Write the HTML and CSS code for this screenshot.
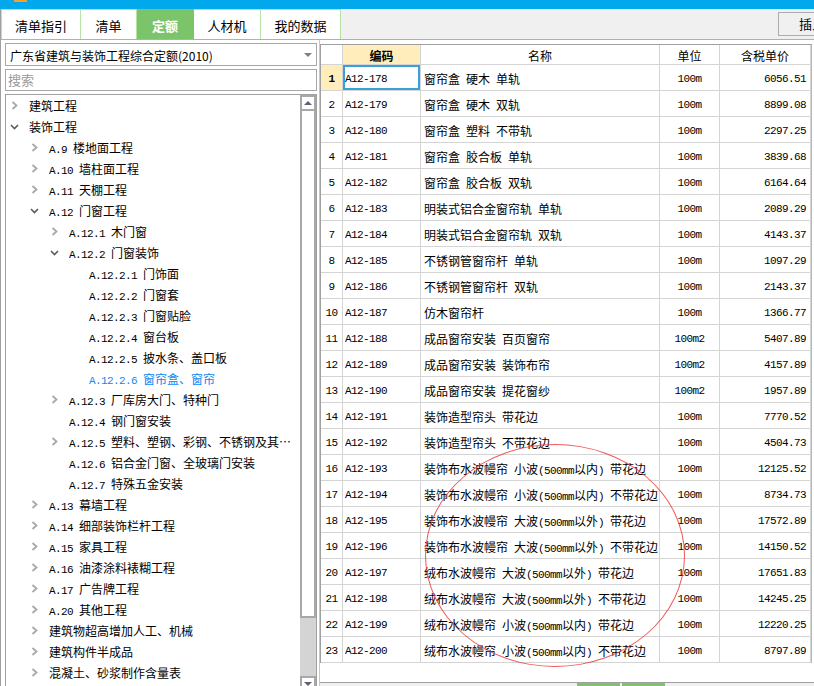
FILE: index.html
```html
<!DOCTYPE html>
<html lang="zh-CN">
<head>
<meta charset="utf-8">
<title>定额</title>
<link rel="stylesheet" href="styles.css">
</head>
<body>
<div class="titlebar"><span class="appicon"></span></div>
<div class="toolbar">
  <div class="tabs">
    <div class="tab t1">清单指引</div>
    <div class="tab t2">清单</div>
    <div class="tab t3 active">定额</div>
    <div class="tab t4">人材机</div>
    <div class="tab t5">我的数据</div>
  </div>
  <div class="spacer"></div>
  <div class="btn">插入</div>
</div>
<div class="main">
  <aside class="left">
    <div class="select"><span>广东省建筑与装饰工程综合定额(2010)</span><span class="caret"></span></div>
    <div class="search">搜索</div>
    <div class="tree">
      <div class="tree-list">
        <div class="node l0"><span class="tw"><svg class="chev-r" width="7" height="9" viewBox="0 0 7 9"><path d="M1.5 1 L5.5 4.5 L1.5 8"/></svg></span><span class="lbl">建筑工程</span></div>
        <div class="node l0"><span class="tw"><svg class="chev-d" width="9" height="6" viewBox="0 0 9 6"><path d="M1 1 L4.5 4.5 L8 1"/></svg></span><span class="lbl">装饰工程</span></div>
        <div class="node l1"><span class="tw"><svg class="chev-r" width="7" height="9" viewBox="0 0 7 9"><path d="M1.5 1 L5.5 4.5 L1.5 8"/></svg></span><span class="lbl"><span class="c">A.9 </span>楼地面工程</span></div>
        <div class="node l1"><span class="tw"><svg class="chev-r" width="7" height="9" viewBox="0 0 7 9"><path d="M1.5 1 L5.5 4.5 L1.5 8"/></svg></span><span class="lbl"><span class="c">A.10 </span>墙柱面工程</span></div>
        <div class="node l1"><span class="tw"><svg class="chev-r" width="7" height="9" viewBox="0 0 7 9"><path d="M1.5 1 L5.5 4.5 L1.5 8"/></svg></span><span class="lbl"><span class="c">A.11 </span>天棚工程</span></div>
        <div class="node l1"><span class="tw"><svg class="chev-d" width="9" height="6" viewBox="0 0 9 6"><path d="M1 1 L4.5 4.5 L8 1"/></svg></span><span class="lbl"><span class="c">A.12 </span>门窗工程</span></div>
        <div class="node l2"><span class="tw"><svg class="chev-r" width="7" height="9" viewBox="0 0 7 9"><path d="M1.5 1 L5.5 4.5 L1.5 8"/></svg></span><span class="lbl"><span class="c">A.12.1 </span>木门窗</span></div>
        <div class="node l2"><span class="tw"><svg class="chev-d" width="9" height="6" viewBox="0 0 9 6"><path d="M1 1 L4.5 4.5 L8 1"/></svg></span><span class="lbl"><span class="c">A.12.2 </span>门窗装饰</span></div>
        <div class="node l3"><span class="tw"></span><span class="lbl"><span class="c">A.12.2.1 </span>门饰面</span></div>
        <div class="node l3"><span class="tw"></span><span class="lbl"><span class="c">A.12.2.2 </span>门窗套</span></div>
        <div class="node l3"><span class="tw"></span><span class="lbl"><span class="c">A.12.2.3 </span>门窗贴脸</span></div>
        <div class="node l3"><span class="tw"></span><span class="lbl"><span class="c">A.12.2.4 </span>窗台板</span></div>
        <div class="node l3"><span class="tw"></span><span class="lbl"><span class="c">A.12.2.5 </span>披水条、盖口板</span></div>
        <div class="node l3 selected"><span class="tw"></span><span class="lbl"><span class="c">A.12.2.6 </span>窗帘盒、窗帘</span></div>
        <div class="node l2"><span class="tw"><svg class="chev-r" width="7" height="9" viewBox="0 0 7 9"><path d="M1.5 1 L5.5 4.5 L1.5 8"/></svg></span><span class="lbl"><span class="c">A.12.3 </span>厂库房大门、特种门</span></div>
        <div class="node l2"><span class="tw"></span><span class="lbl"><span class="c">A.12.4 </span>钢门窗安装</span></div>
        <div class="node l2"><span class="tw"><svg class="chev-r" width="7" height="9" viewBox="0 0 7 9"><path d="M1.5 1 L5.5 4.5 L1.5 8"/></svg></span><span class="lbl"><span class="c">A.12.5 </span>塑料、塑钢、彩钢、不锈钢及其…</span></div>
        <div class="node l2"><span class="tw"></span><span class="lbl"><span class="c">A.12.6 </span>铝合金门窗、全玻璃门安装</span></div>
        <div class="node l2"><span class="tw"></span><span class="lbl"><span class="c">A.12.7 </span>特殊五金安装</span></div>
        <div class="node l1"><span class="tw"><svg class="chev-r" width="7" height="9" viewBox="0 0 7 9"><path d="M1.5 1 L5.5 4.5 L1.5 8"/></svg></span><span class="lbl"><span class="c">A.13 </span>幕墙工程</span></div>
        <div class="node l1"><span class="tw"><svg class="chev-r" width="7" height="9" viewBox="0 0 7 9"><path d="M1.5 1 L5.5 4.5 L1.5 8"/></svg></span><span class="lbl"><span class="c">A.14 </span>细部装饰栏杆工程</span></div>
        <div class="node l1"><span class="tw"><svg class="chev-r" width="7" height="9" viewBox="0 0 7 9"><path d="M1.5 1 L5.5 4.5 L1.5 8"/></svg></span><span class="lbl"><span class="c">A.15 </span>家具工程</span></div>
        <div class="node l1"><span class="tw"><svg class="chev-r" width="7" height="9" viewBox="0 0 7 9"><path d="M1.5 1 L5.5 4.5 L1.5 8"/></svg></span><span class="lbl"><span class="c">A.16 </span>油漆涂料裱糊工程</span></div>
        <div class="node l1"><span class="tw"><svg class="chev-r" width="7" height="9" viewBox="0 0 7 9"><path d="M1.5 1 L5.5 4.5 L1.5 8"/></svg></span><span class="lbl"><span class="c">A.17 </span>广告牌工程</span></div>
        <div class="node l1"><span class="tw"><svg class="chev-r" width="7" height="9" viewBox="0 0 7 9"><path d="M1.5 1 L5.5 4.5 L1.5 8"/></svg></span><span class="lbl"><span class="c">A.20 </span>其他工程</span></div>
        <div class="node l1"><span class="tw"><svg class="chev-r" width="7" height="9" viewBox="0 0 7 9"><path d="M1.5 1 L5.5 4.5 L1.5 8"/></svg></span><span class="lbl">建筑物超高增加人工、机械</span></div>
        <div class="node l1"><span class="tw"><svg class="chev-r" width="7" height="9" viewBox="0 0 7 9"><path d="M1.5 1 L5.5 4.5 L1.5 8"/></svg></span><span class="lbl">建筑构件半成品</span></div>
        <div class="node l1"><span class="tw"><svg class="chev-r" width="7" height="9" viewBox="0 0 7 9"><path d="M1.5 1 L5.5 4.5 L1.5 8"/></svg></span><span class="lbl">混凝土、砂浆制作含量表</span></div>
      </div>
      <div class="vscroll">
        <div class="sb-btn"><span class="tri-up"></span></div>
        <div class="sb-thumb"></div>
        <div class="sb-track"></div>
        <div class="sb-btn"><span class="tri-down"></span></div>
      </div>
    </div>
  </aside>
  <section class="right">
    <table class="grid">
      <colgroup>
        <col class="w-no"><col class="w-code"><col class="w-name"><col class="w-unit"><col class="w-price">
      </colgroup>
      <thead>
        <tr><th class="corner"></th><th class="hl">编码</th><th>名称</th><th>单位</th><th>含税单价</th></tr>
      </thead>
      <tbody>
        <tr><td class="no cur">1</td><td class="code sel">A12-178</td><td class="name">窗帘盒 硬木 单轨</td><td class="unit">100m</td><td class="price">6056.51</td></tr>
        <tr><td class="no">2</td><td class="code">A12-179</td><td class="name">窗帘盒 硬木 双轨</td><td class="unit">100m</td><td class="price">8899.08</td></tr>
        <tr><td class="no">3</td><td class="code">A12-180</td><td class="name">窗帘盒 塑料 不带轨</td><td class="unit">100m</td><td class="price">2297.25</td></tr>
        <tr><td class="no">4</td><td class="code">A12-181</td><td class="name">窗帘盒 胶合板 单轨</td><td class="unit">100m</td><td class="price">3839.68</td></tr>
        <tr><td class="no">5</td><td class="code">A12-182</td><td class="name">窗帘盒 胶合板 双轨</td><td class="unit">100m</td><td class="price">6164.64</td></tr>
        <tr><td class="no">6</td><td class="code">A12-183</td><td class="name">明装式铝合金窗帘轨 单轨</td><td class="unit">100m</td><td class="price">2089.29</td></tr>
        <tr><td class="no">7</td><td class="code">A12-184</td><td class="name">明装式铝合金窗帘轨 双轨</td><td class="unit">100m</td><td class="price">4143.37</td></tr>
        <tr><td class="no">8</td><td class="code">A12-185</td><td class="name">不锈钢管窗帘杆 单轨</td><td class="unit">100m</td><td class="price">1097.29</td></tr>
        <tr><td class="no">9</td><td class="code">A12-186</td><td class="name">不锈钢管窗帘杆 双轨</td><td class="unit">100m</td><td class="price">2143.37</td></tr>
        <tr><td class="no">10</td><td class="code">A12-187</td><td class="name">仿木窗帘杆</td><td class="unit">100m</td><td class="price">1366.77</td></tr>
        <tr><td class="no">11</td><td class="code">A12-188</td><td class="name">成品窗帘安装 百页窗帘</td><td class="unit">100m2</td><td class="price">5407.89</td></tr>
        <tr><td class="no">12</td><td class="code">A12-189</td><td class="name">成品窗帘安装 装饰布帘</td><td class="unit">100m2</td><td class="price">4157.89</td></tr>
        <tr><td class="no">13</td><td class="code">A12-190</td><td class="name">成品窗帘安装 提花窗纱</td><td class="unit">100m2</td><td class="price">1957.89</td></tr>
        <tr><td class="no">14</td><td class="code">A12-191</td><td class="name">装饰造型帘头 带花边</td><td class="unit">100m</td><td class="price">7770.52</td></tr>
        <tr><td class="no">15</td><td class="code">A12-192</td><td class="name">装饰造型帘头 不带花边</td><td class="unit">100m</td><td class="price">4504.73</td></tr>
        <tr><td class="no">16</td><td class="code">A12-193</td><td class="name">装饰布水波幔帘 小波<span class="c">(500mm</span>以内<span class="c">) </span>带花边</td><td class="unit">100m</td><td class="price">12125.52</td></tr>
        <tr><td class="no">17</td><td class="code">A12-194</td><td class="name">装饰布水波幔帘 小波<span class="c">(500mm</span>以内<span class="c">) </span>不带花边</td><td class="unit">100m</td><td class="price">8734.73</td></tr>
        <tr><td class="no">18</td><td class="code">A12-195</td><td class="name">装饰布水波幔帘 大波<span class="c">(500mm</span>以外<span class="c">) </span>带花边</td><td class="unit">100m</td><td class="price">17572.89</td></tr>
        <tr><td class="no">19</td><td class="code">A12-196</td><td class="name">装饰布水波幔帘 大波<span class="c">(500mm</span>以外<span class="c">) </span>不带花边</td><td class="unit">100m</td><td class="price">14150.52</td></tr>
        <tr><td class="no">20</td><td class="code">A12-197</td><td class="name">绒布水波幔帘 大波<span class="c">(500mm</span>以外<span class="c">) </span>带花边</td><td class="unit">100m</td><td class="price">17651.83</td></tr>
        <tr><td class="no">21</td><td class="code">A12-198</td><td class="name">绒布水波幔帘 大波<span class="c">(500mm</span>以外<span class="c">) </span>不带花边</td><td class="unit">100m</td><td class="price">14245.25</td></tr>
        <tr><td class="no">22</td><td class="code">A12-199</td><td class="name">绒布水波幔帘 小波<span class="c">(500mm</span>以内<span class="c">) </span>带花边</td><td class="unit">100m</td><td class="price">12220.25</td></tr>
        <tr><td class="no">23</td><td class="code">A12-200</td><td class="name">绒布水波幔帘 小波<span class="c">(500mm</span>以内<span class="c">) </span>不带花边</td><td class="unit">100m</td><td class="price">8797.89</td></tr>
      </tbody>
    </table>
    <div class="filler"></div>
    <div class="bottombar"><span class="btab"></span><span class="btab"></span></div>
  </section>
</div>
<div class="mark"></div>
</body>
</html>
```
FILE: styles.css
```css
html, body {
  margin: 0;
  padding: 0;
}
body {
  width: 814px;
  height: 686px;
  overflow: hidden;
  position: relative;
  background: #f0f0f0;
  color: #000;
  font-family: "Noto Sans CJK SC", "Noto Sans", sans-serif;
  font-size: 12px;
}

/* title bar */
.titlebar {
  height: 9px;
  background: #02a8ec;
  padding-left: 14px;
  box-sizing: border-box;
}
.appicon {
  display: block;
  width: 13px;
  height: 2px;
  background: #f2a033;
}

/* tab toolbar */
.toolbar {
  display: flex;
  height: 31px;
  box-sizing: border-box;
  border-bottom: 1px solid #8fcb7c;
  border-left: 1px solid #a0a0a0;
  overflow: hidden;
}
.tabs {
  display: flex;
  flex: none;
}
.tab {
  box-sizing: border-box;
  height: 30px;
  padding-top: 2px;
  background: #fff;
  border-top: 1px solid #b7e4a6;
  border-right: 1px solid #b7e4a6;
  display: flex;
  align-items: center;
  justify-content: center;
  font-size: 13px;
  flex: none;
}
.t1 { width: 80px; border-left: 1px solid #b7e4a6; }
.t2 { width: 56px; }
.t3 { width: 57px; }
.t4 { width: 67px; }
.t5 { width: 80px; }
.tab.active {
  background: #7bc46a;
  border-color: #7bc46a;
  color: #fff;
  font-weight: bold;
}
.spacer {
  flex: 0 0 437px;
}
.btn {
  flex: none;
  width: 60px;
  height: 24px;
  margin-top: 3px;
  box-sizing: border-box;
  border: 1px solid #adadad;
  background: #f0f0f0;
  padding-left: 20px;
  line-height: 22px;
  font-size: 13px;
}

/* main area */
.main {
  display: flex;
  height: 646px;
  background: #fff;
  border-left: 1px solid #a0a0a0;
}

.left {
  width: 318px;
  flex: none;
  box-sizing: border-box;
  padding: 3px 0 0 4px;
  display: flex;
  flex-direction: column;
  gap: 3px;
}
.select {
  flex: none;
  width: 312px;
  height: 23px;
  box-sizing: border-box;
  border: 1px solid #a8a8a8;
  display: flex;
  align-items: center;
  justify-content: space-between;
  padding: 1px 4px 0 4px;
  white-space: nowrap;
}
.caret {
  width: 0;
  height: 0;
  border-left: 4px solid transparent;
  border-right: 4px solid transparent;
  border-top: 4px solid #808080;
}
.search {
  flex: none;
  width: 312px;
  height: 22px;
  box-sizing: border-box;
  border: 1px solid #a8a8a8;
  color: #9a9a9a;
  padding-left: 2px;
  line-height: 20px;
  font-size: 13px;
}

.tree {
  width: 312px;
  height: 600px;
  flex: none;
  box-sizing: border-box;
  border: 1px solid #a0a0a0;
  display: flex;
  overflow: hidden;
}
.tree-list {
  flex: 1;
  overflow: hidden;
}
.node {
  height: 21px;
  display: flex;
  align-items: center;
  white-space: nowrap;
  word-spacing: 3px;
}
.l0 { padding-left: 3px; }
.l1 { padding-left: 23px; }
.l2 { padding-left: 43px; }
.l3 { padding-left: 63px; }
.tw {
  width: 20px;
  flex: none;
  display: flex;
  align-items: center;
}
.chev-r {
  margin-left: 2px;
  fill: none;
  stroke: #a8a8a8;
  stroke-width: 1.8;
}
.chev-d {
  margin-left: 1px;
  fill: none;
  stroke: #5a5a5a;
  stroke-width: 1.6;
}
.lbl {
  line-height: 21px;
}
.c {
  font-family: "Liberation Mono", "DejaVu Sans Mono", monospace;
  font-size: 11px;
  letter-spacing: -0.6px;
  word-spacing: 0;
  line-height: 11px;
}
.selected .lbl {
  color: #0a8af2;
}

.vscroll {
  width: 16px;
  flex: none;
  display: flex;
  flex-direction: column;
}
.sb-btn {
  height: 16px;
  flex: none;
  box-sizing: border-box;
  border: 2px solid #a8a8a8;
  background: #fff;
  display: flex;
  align-items: center;
  justify-content: center;
}
.tri-up {
  width: 0;
  height: 0;
  border-left: 4px solid transparent;
  border-right: 4px solid transparent;
  border-bottom: 4px solid #5f6070;
}
.tri-down {
  width: 0;
  height: 0;
  border-left: 4px solid transparent;
  border-right: 4px solid transparent;
  border-top: 4px solid #5f6070;
}
.sb-thumb {
  height: 507px;
  flex: none;
  box-sizing: border-box;
  border: 2px solid #a8a8a8;
  border-top: none;
  background: #fff;
}
.sb-track {
  height: 58px;
  flex: none;
  background: #d4d4d4;
}

/* right grid panel */
.right {
  flex: 1;
  box-sizing: border-box;
  border-left: 1px solid #c8c8c8;
  padding-top: 4px;
  display: flex;
  flex-direction: column;
  background: #fff;
}
.grid {
  flex: none;
  border-collapse: separate;
  border-spacing: 0;
  table-layout: fixed;
  width: 492px;
  border-top: 1px solid #a0a0a0;
  border-left: 1px solid #a0a0a0;
  border-right: 1px solid #b8b8b8;
}
.w-no { width: 22px; }
.w-code { width: 78px; }
.w-name { width: 239px; }
.w-unit { width: 60px; }
.w-price { width: 91px; }

.grid th, .grid td {
  padding: 0;
  border-right: 1px solid #d4d4d4;
  border-bottom: 1px solid #d4d4d4;
  white-space: nowrap;
  overflow: hidden;
}
.grid th {
  padding-top: 2px;
  line-height: 17px;
  font-weight: normal;
  text-align: center;
}
.grid th.hl {
  background: #ffeebb;
  font-weight: bold;
}
.grid td {
  padding-top: 3px;
  line-height: 22px;
}
.grid td.no {
  text-align: center;
  font-family: "Liberation Mono", "DejaVu Sans Mono", monospace;
  font-size: 11px;
  letter-spacing: -0.6px;
}
.grid td.no.cur {
  background: #ffeebb;
  font-weight: bold;
}
.grid td.code {
  padding-left: 2px;
  font-family: "Liberation Mono", "DejaVu Sans Mono", monospace;
  font-size: 11px;
  letter-spacing: -0.6px;
}
.grid td.sel {
  box-shadow: inset 0 0 0 2px #3aa0d8;
}
.grid td.name {
  padding-left: 3px;
  word-spacing: 3.3px;
}
.grid td.unit {
  text-align: center;
  font-family: "Liberation Mono", "DejaVu Sans Mono", monospace;
  font-size: 11px;
  letter-spacing: -0.6px;
}
.grid td.price {
  text-align: right;
  padding-right: 4px;
  font-family: "Liberation Mono", "DejaVu Sans Mono", monospace;
  font-size: 11px;
  letter-spacing: -0.6px;
}
.filler {
  flex: 1;
}
.bottombar {
  height: 3px;
  flex: none;
  border-top: 1px solid #a0a0a0;
  background: #f0f0f0;
  display: flex;
  gap: 2px;
  padding-left: 257px;
}
.btab {
  width: 43px;
  background: #7bc46a;
}

/* red hand-drawn annotation ellipse */
.mark {
  position: absolute;
  left: 425px;
  top: 444px;
  width: 260px;
  height: 223px;
  box-sizing: border-box;
  border: 1px solid rgba(236, 60, 60, 0.85);
  border-radius: 50%;
  pointer-events: none;
}
```
